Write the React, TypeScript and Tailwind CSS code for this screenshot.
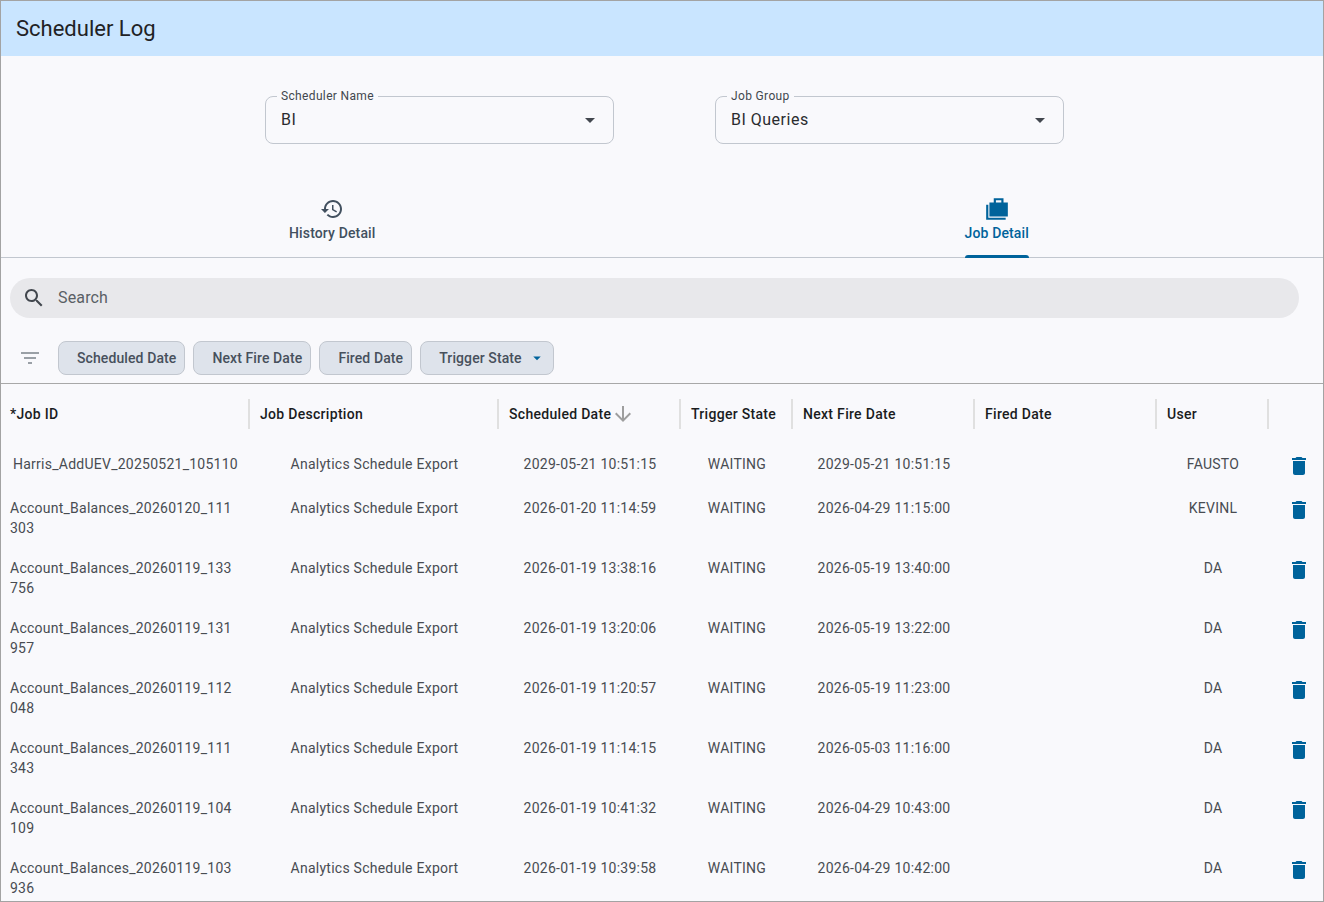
const historyPath =
  'M13 3c-4.97 0-9 4.03-9 9H1l3.89 3.89.07.14L9 12H6c0-3.87 3.13-7 7-7s7 3.13 7 7-3.13 7-7 7c-1.93 0-3.68-.79-4.94-2.06l-1.42 1.42C8.27 19.99 10.51 21 13 21c4.97 0 9-4.03 9-9s-4.03-9-9-9zm-1 5v5l4.28 2.54.72-1.21-3.5-2.08V8H12z';
const casesPath = 'M18 6V2H9v4H5v13h17V6h-4zm-7-2h5v2h-5V4zM4 8H2v14h18v-2H4V8z';
const deletePath = 'M6 19c0 1.1.9 2 2 2h8c1.1 0 2-.9 2-2V7H6v12zM19 4h-3.5l-1-1h-5l-1 1H5v2h14V4z';
const dropPath = 'M7 10l5 5 5-5z';
const searchPath =
  'M15.5 14h-.79l-.28-.27C15.41 12.59 16 11.11 16 9.5 16 5.91 13.09 3 9.5 3S3 5.91 3 9.5 5.91 16 9.5 16c1.61 0 3.09-.59 4.23-1.57l.27.28v.79l5 4.99L20.49 19l-4.99-5zm-6 0C7.01 14 5 11.99 5 9.5S7.01 5 9.5 5 14 7.01 14 9.5 11.99 14 9.5 14z';
const filterPath = 'M10 18h4v-2h-4v2zM3 6v2h18V6H3zm3 7h12v-2H6v2z';
const arrowPath = 'M20 12l-1.41-1.41L13 16.17V4h-2v12.17l-5.58-5.59L4 12l8 8 8-8z';

function Icon({ d, className }: { d: string; className: string }) {
  return (
    <svg viewBox="0 0 24 24" fill="currentColor" className={className}>
      <path d={d} fillRule="evenodd" />
    </svg>
  );
}

const cols = 'grid grid-cols-[249px_249px_182px_112px_182px_182px_112px_1fr]';

const headers = ['*Job ID', 'Job Description', 'Scheduled Date', 'Trigger State', 'Next Fire Date', 'Fired Date', 'User'];

const rows = [
  ['Harris_AddUEV_20250521_105110', '2029-05-21 10:51:15', '2029-05-21 10:51:15', 'FAUSTO'],
  ['Account_Balances_20260120_111303', '2026-01-20 11:14:59', '2026-04-29 11:15:00', 'KEVINL'],
  ['Account_Balances_20260119_133756', '2026-01-19 13:38:16', '2026-05-19 13:40:00', 'DA'],
  ['Account_Balances_20260119_131957', '2026-01-19 13:20:06', '2026-05-19 13:22:00', 'DA'],
  ['Account_Balances_20260119_112048', '2026-01-19 11:20:57', '2026-05-19 11:23:00', 'DA'],
  ['Account_Balances_20260119_111343', '2026-01-19 11:14:15', '2026-05-03 11:16:00', 'DA'],
  ['Account_Balances_20260119_104109', '2026-01-19 10:41:32', '2026-04-29 10:43:00', 'DA'],
  ['Account_Balances_20260119_103936', '2026-01-19 10:39:58', '2026-04-29 10:42:00', 'DA'],
];

function SelectField({ label, value }: { label: string; value: string }) {
  return (
    <div className="relative flex h-12 w-[349px] items-center justify-between rounded-lg border border-[#c2c7cf] pl-[15px] pr-[11px]">
      <span className="absolute left-[11px] top-[-9px] bg-[#f9f9fc] px-[4px] text-xs leading-4 tracking-[0.35px] text-[#42474e]">
        {label}
      </span>
      <span className="text-base tracking-[0.5px] text-[#2a2c2f]">{value}</span>
      <Icon d={dropPath} className="h-6 w-6 text-[#42474e]" />
    </div>
  );
}

function FilterChip({ label, dropdown }: { label: string; dropdown?: boolean }) {
  return (
    <button className="flex h-[34px] items-center rounded-lg border border-[#c2c7cf] bg-[#dee3eb] pl-[18px] pr-[8px] text-sm font-medium tracking-[0.1px] text-[#47505c]">
      {label}
      {dropdown && <Icon d={dropPath} className="ml-[6px] mr-[-1px] h-[18px] w-[18px] text-[#00639b]" />}
    </button>
  );
}

export default function App() {
  return (
    <div className="h-[902px] overflow-hidden border border-[#a3a3a3] bg-[#f9f9fc] font-['Roboto',sans-serif]">
      <header className="flex h-[55px] items-center bg-[#c9e5ff] pl-[15px]">
        <h1 className="text-[22px] leading-7 text-[#1f2225]">Scheduler Log</h1>
      </header>

      <div className="flex gap-[101px] pl-[264px] pt-[40px]">
        <SelectField label="Scheduler Name" value="BI" />
        <SelectField label="Job Group" value="BI Queries" />
      </div>

      {/* Tabs */}
      <div className="flex h-[114px] gap-[589px] border-b border-[#c2c7cf] pl-[288px]">
        <div className="flex flex-col items-center pt-[53px] text-[#42505f]">
          <Icon d={historyPath} className="h-6 w-6" />
          <span className="mt-[2px] text-sm font-medium leading-5 tracking-[0.14px]">History Detail</span>
        </div>
        <div className="relative flex flex-col items-center pt-[52px] text-[#00639b]">
          <Icon d={casesPath} className="h-[26px] w-[26px]" />
          <span className="mt-px text-sm font-medium leading-5 tracking-[0.14px]">Job Detail</span>
          <div className="absolute bottom-[-1px] left-0 right-0 h-[3px] rounded-t-[3px] bg-[#00639b]" />
        </div>
      </div>

      <div className="pl-[9px] pr-[24px] pt-[20px]">
        <div className="flex h-10 items-center rounded-full bg-[#e8e8eb] pl-[12px] text-[#42474e]">
          <Icon d={searchPath} className="h-6 w-6" />
          <span className="ml-[12px] text-base tracking-[0.15px] text-[#5a5f65]">Search</span>
        </div>
      </div>

      <div className="flex h-[66px] items-start border-b border-[#a8a8a8] pl-[57px] pt-[23px]">
        <div className="relative flex gap-[8px]">
          <Icon d={filterPath} className="absolute left-[-40px] top-[5px] h-6 w-6 text-[#9aa0a6]" />
          <FilterChip label="Scheduled Date" />
          <FilterChip label="Next Fire Date" />
          <FilterChip label="Fired Date" />
          <FilterChip label="Trigger State" dropdown />
        </div>
      </div>

      {/* Table */}
      <div className={`${cols} h-[60px] items-center`}>
        {headers.map((h, i) => (
          <div
            key={h}
            className={`flex h-[30px] items-center border-r-2 border-[#e0e0e0] text-sm font-medium tracking-[0.3px] text-[#1a1c1e] ${i === 0 ? 'pl-[9px]' : 'pl-[10px]'}`}
          >
            {h}
            {i === 2 && <Icon d={arrowPath} className="h-6 w-6 text-[#9e9e9e]" />}
          </div>
        ))}
      </div>

      {rows.map((r, idx) => (
        <div key={r[0]} className={`${cols} py-[10px] text-sm leading-5 tracking-[0.25px] text-[#484c52]`}>
          <div className={idx === 0 ? 'whitespace-nowrap pl-[12px]' : 'w-[236px] break-all pl-[9px]'}>{r[0]}</div>
          <div className="text-center">Analytics Schedule Export</div>
          <div className="text-center">{r[1]}</div>
          <div className="text-center">WAITING</div>
          <div className="text-center">{r[2]}</div>
          <div />
          <div className="text-center">{r[3]}</div>
          <div className="pl-[18px] text-[#00639b]">
            <Icon d={deletePath} className="h-6 w-6" />
          </div>
        </div>
      ))}
    </div>
  );
}
